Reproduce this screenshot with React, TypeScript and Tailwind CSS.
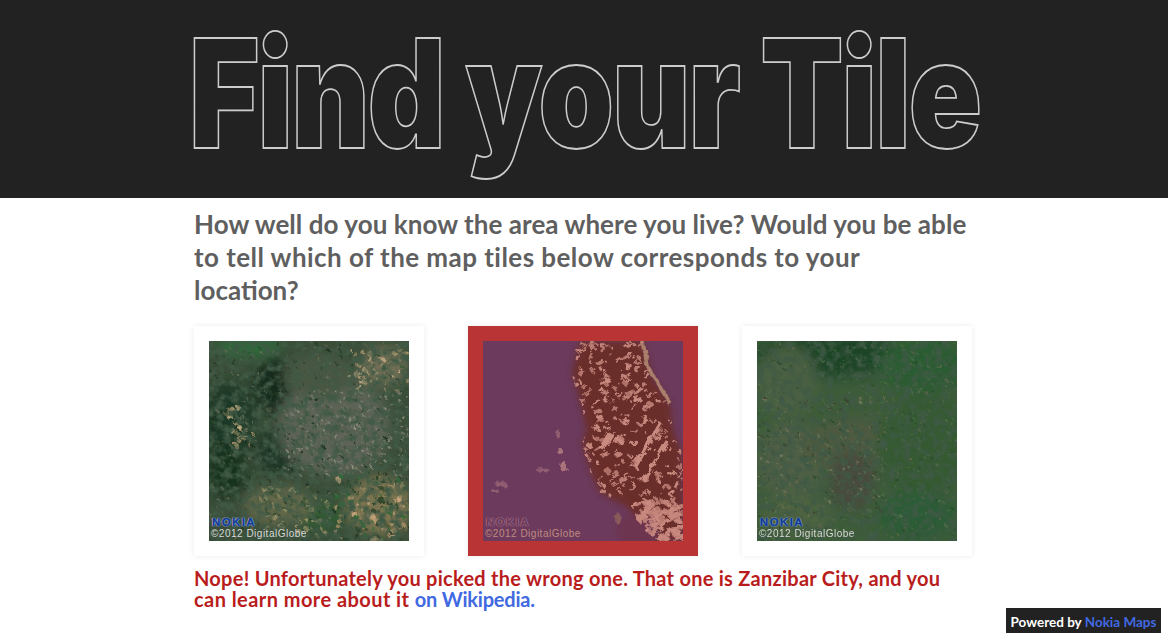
const rng = (seed: number) => () => {
  seed = (seed * 16807) % 2147483647;
  return (seed - 1) / 2147483646;
};

type Patch = [number, number, number, number, string];
type Cluster = { x: number; y: number; w: number; h: number; count: number; colors: string[]; size: number };

// broad colour areas of each satellite tile, then clusters of speckle and a mottled overlay
const cityPatches: Patch[] = [
  [40, 6, 34, 10, "#2f6a3a"],
  [70, 45, 26, 28, "#142b1c"],
  [20, 80, 26, 40, "#1f3825"],
  [18, 130, 20, 26, "#15321f"],
  [70, 110, 22, 24, "#1f3625"],
  [125, 85, 56, 50, "#5d6356"],
  [110, 35, 36, 22, "#4a5643"],
  [110, 175, 26, 14, "#2f5a32"],
  [170, 165, 34, 30, "#7c7350"],
  [175, 25, 24, 20, "#6f6e54"],
  [70, 165, 34, 20, "#63674a"],
];

const cityClusters: Cluster[] = [
  { x: 0, y: 0, w: 200, h: 200, count: 900, colors: ["#1a2e20", "#6a7059", "#33502f"], size: 1.2 },
  { x: 75, y: 50, w: 125, h: 85, count: 260, colors: ["#84857a", "#9b9b88"], size: 1 },
  { x: 140, y: 8, w: 60, h: 45, count: 60, colors: ["#b09a70", "#cbb088", "#2f5a30"], size: 2.4 },
  { x: 125, y: 135, w: 75, h: 65, count: 130, colors: ["#b8986c", "#d0a880", "#2f6a38", "#1f3a20"], size: 3 },
  { x: 50, y: 145, w: 75, h: 50, count: 70, colors: ["#9a9468", "#b4a476", "#2f4c2c"], size: 2.4 },
  { x: 15, y: 65, w: 30, h: 40, count: 24, colors: ["#ad966c", "#c4ae84"], size: 2.4 },
];

const fieldPatches: Patch[] = [
  [75, 15, 80, 22, "#1d4527"],
  [165, 25, 45, 28, "#2b5c32"],
  [30, 40, 30, 35, "#4c6042"],
  [35, 120, 36, 40, "#4f5f44"],
  [100, 105, 55, 28, "#505a40"],
  [95, 140, 22, 30, "#4a4a3c"],
  [165, 105, 46, 55, "#365a33"],
  [160, 175, 40, 25, "#2b5c35"],
  [40, 175, 36, 20, "#4d6441"],
];

const fieldClusters: Cluster[] = [
  { x: 0, y: 0, w: 200, h: 200, count: 900, colors: ["#284a2b", "#557050", "#62674c", "#3f683c"], size: 1.2 },
  { x: 0, y: 55, w: 130, h: 120, count: 170, colors: ["#77745a", "#7d7f62", "#3d3d32"], size: 1.3 },
];

const Speckle = ({ seed, clusters }: { seed: number; clusters: Cluster[] }) => {
  const r = rng(seed);
  return (
    <>
      {clusters.map((c, n) =>
        Array.from({ length: c.count }, (_, i) => (
          <ellipse
            key={`${n}-${i}`}
            cx={c.x + r() * c.w}
            cy={c.y + r() * c.h}
            rx={0.6 + r() * c.size}
            ry={0.6 + r() * c.size}
            fill={c.colors[Math.floor(r() * c.colors.length)]}
            opacity={0.45 + r() * 0.5}
          />
        )),
      )}
    </>
  );
};

const GreenTile = ({ id, base, patches, seed, clusters }: { id: string; base: string; patches: Patch[]; seed: number; clusters: Cluster[] }) => (
  <svg viewBox="0 0 200 200" className="block h-full w-full">
    <defs>
      <filter id={`${id}-soft`} x="-30%" y="-30%" width="160%" height="160%">
        <feGaussianBlur stdDeviation="6" />
      </filter>
      <filter id={`${id}-spot`}>
        <feTurbulence type="fractalNoise" baseFrequency="0.2" numOctaves="2" seed={seed} />
        <feDisplacementMap in="SourceGraphic" scale="6" />
        <feGaussianBlur stdDeviation="0.6" />
      </filter>
      <filter id={`${id}-noise`} x="0" y="0" width="100%" height="100%">
        <feTurbulence type="fractalNoise" baseFrequency="0.13" numOctaves="3" seed={seed} />
        <feColorMatrix values="0 0 0 0 0.05  0 0 0 0 0.1  0 0 0 0 0.06  2.6 0 0 0 -1" />
      </filter>
    </defs>
    <rect width="200" height="200" fill={base} />
    <g filter={`url(#${id}-soft)`}>
      {patches.map(([cx, cy, rx, ry, fill], i) => (
        <ellipse key={i} cx={cx} cy={cy} rx={rx} ry={ry} fill={fill} />
      ))}
    </g>
    <g filter={`url(#${id}-spot)`}>
      <Speckle seed={seed} clusters={clusters} />
    </g>
    <rect width="200" height="200" filter={`url(#${id}-noise)`} />
  </svg>
);

const land = "97,0 160,0 169,36 187,62 190,89 199,112 200,200 177,200 164,192 144,166 117,152 107,129 99,102 104,89 97,59 89,32";

const IslandTile = () => {
  const r = rng(77);
  const spots = Array.from({ length: 440 }, () => ({
    x: 85 + r() * 115,
    y: r() * 200,
    w: 0.8 + r() * 3.6,
    h: 0.7 + r() * 1.6,
    o: 0.7 + r() * 0.3,
  }));
  const south = Array.from({ length: 90 }, () => ({
    x: 155 + r() * 45,
    y: 160 + r() * 40,
    w: 1.5 + r() * 4,
    h: 1 + r() * 2.4,
    o: 0.8,
  }));
  return (
    <svg viewBox="0 0 200 200" className="block h-full w-full">
      <defs>
        <clipPath id="island-land">
          <polygon points={land} />
        </clipPath>
        <filter id="island-rough" x="-5%" y="-5%" width="110%" height="110%">
          <feTurbulence type="fractalNoise" baseFrequency="0.16" numOctaves="2" seed="4" />
          <feDisplacementMap in="SourceGraphic" scale="7" />
          <feGaussianBlur stdDeviation="0.6" />
        </filter>
        <filter id="island-edge" x="-10%" y="-10%" width="120%" height="120%">
          <feGaussianBlur stdDeviation="3" />
        </filter>
      </defs>
      <rect width="200" height="200" fill="#6b3a5c" />
      <polygon points={land} fill="#6b2f2a" filter="url(#island-edge)" />
      <ellipse cx="155" cy="190" rx="22" ry="16" fill="#6d3450" filter="url(#island-edge)" />
      <g filter="url(#island-rough)">
        <polyline points="160,0 164,25 175,42 187,62" fill="none" stroke="#a97f6c" strokeWidth="3.5" />
        <g clipPath="url(#island-land)">
          {[...spots, ...south].map((s, i) => (
            <ellipse key={i} cx={s.x} cy={s.y} rx={s.w} ry={s.h} opacity={s.o} transform={`rotate(-30 ${s.x} ${s.y})`} fill="#c98a80" />
          ))}
          <line x1="152" y1="126" x2="178" y2="82" stroke="#c98a80" strokeWidth="4" />
          <line x1="160" y1="140" x2="184" y2="100" stroke="#c98a80" strokeWidth="3" />
          <line x1="118" y1="108" x2="128" y2="92" stroke="#c98a80" strokeWidth="6" />
        </g>
        <ellipse cx="77" cy="110" rx="3" ry="3" fill="#a8737a" />
        <ellipse cx="80" cy="125" rx="4" ry="5" fill="#a8737a" />
        <ellipse cx="60" cy="129" rx="7" ry="2" fill="#8f5b70" />
        <ellipse cx="18" cy="143" rx="6" ry="3" fill="#8f5b70" />
        <ellipse cx="12" cy="150" rx="4" ry="2" fill="#8f5b70" />
        <ellipse cx="75" cy="93" rx="3" ry="4" fill="#8f5b70" />
        <ellipse cx="135" cy="178" rx="3" ry="6" fill="#8a5a58" />
      </g>
    </svg>
  );
};

const Credit = ({ wrong }: { wrong?: boolean }) => (
  <div className="absolute bottom-0 left-0 pb-[1px] pl-[2px] font-['Liberation_Sans',sans-serif]">
    <div
      className={`pl-[1px] text-[11.5px] leading-[10px] font-bold tracking-[1.4px] ${
        wrong
          ? "text-[#6d3a58] [-webkit-text-stroke:0.6px_#6d3a58] [text-shadow:0_0_1px_#d0a0b4,0_0_1px_#d0a0b4,0_0_1px_#d0a0b4]"
          : "text-[#0f3c96] [-webkit-text-stroke:0.6px_#0f3c96] [text-shadow:0_0_1px_#ffffff,0_0_1px_#ffffff,0_0_1px_#ffffff]"
      }`}
    >
      NOKIA
    </div>
    <div className={`text-[10px] leading-[13px] tracking-[0.5px] ${wrong ? "text-[#c08a80]" : "text-[#d8d8d8]"}`}>
      ©2012 DigitalGlobe
    </div>
  </div>
);

const Card = ({ wrong, children }: { wrong?: boolean; children: React.ReactNode }) => (
  <div className={`h-[230px] w-[230px] p-[15px] shadow-[0_0_6px_rgba(0,0,0,0.08)] ${wrong ? "bg-[#b93535]" : "bg-white"}`}>
    <div className="relative h-[200px] w-[200px] overflow-hidden">{children}</div>
  </div>
);

export default function App() {
  return (
    <div className="h-[633px] overflow-hidden bg-white font-['Lato',sans-serif]">
      <header className="flex h-[198px] justify-center overflow-hidden bg-[#222222]">
        <h1 className="scale-x-[0.805] font-['Inter',sans-serif] text-[151px] leading-[186px] font-black tracking-[-3px] whitespace-nowrap text-transparent [-webkit-text-stroke:1.8px_#cccccc]">
          Find your Tile
        </h1>
      </header>

      <main className="mx-auto w-[780px]">
        <p className="mt-[10px] text-[26px] leading-[33px] font-bold whitespace-nowrap text-[#5f5f5f]">
          <span className="block tracking-[0.06px]">How well do you know the area where you live? Would you be able</span>
          <span className="block tracking-[0.45px]">to tell which of the map tiles below corresponds to your</span>
          <span className="block">location?</span>
        </p>

        <div className="mt-[19px] flex gap-[44px]">
          <Card>
            <GreenTile id="city" base="#3a4d38" patches={cityPatches} seed={11} clusters={cityClusters} />
            <Credit />
          </Card>
          <Card wrong>
            <IslandTile />
            <Credit wrong />
          </Card>
          <Card>
            <GreenTile id="farm" base="#3d5c38" patches={fieldPatches} seed={29} clusters={fieldClusters} />
            <Credit />
          </Card>
        </div>

        <p className="mt-[12px] text-[20px] leading-[21px] font-bold whitespace-nowrap text-[#b91c1c]">
          <span className="block tracking-[0.26px]">Nope! Unfortunately you picked the wrong one. That one is Zanzibar City, and you</span>
          <span className="block tracking-[0.44px]">
            can learn more about it{" "}
            <a href="#" className="tracking-[-0.2px] text-[#4169e1]">
              on Wikipedia.
            </a>
          </span>
        </p>
      </main>

      <div className="fixed right-[7px] bottom-0 flex h-[25px] w-[155px] items-center justify-center bg-[#222222] pt-[3px] text-[13.5px] font-bold whitespace-nowrap text-white">
        Powered by&nbsp;<span className="text-[#4169e1]">Nokia Maps</span>
      </div>
    </div>
  );
}
